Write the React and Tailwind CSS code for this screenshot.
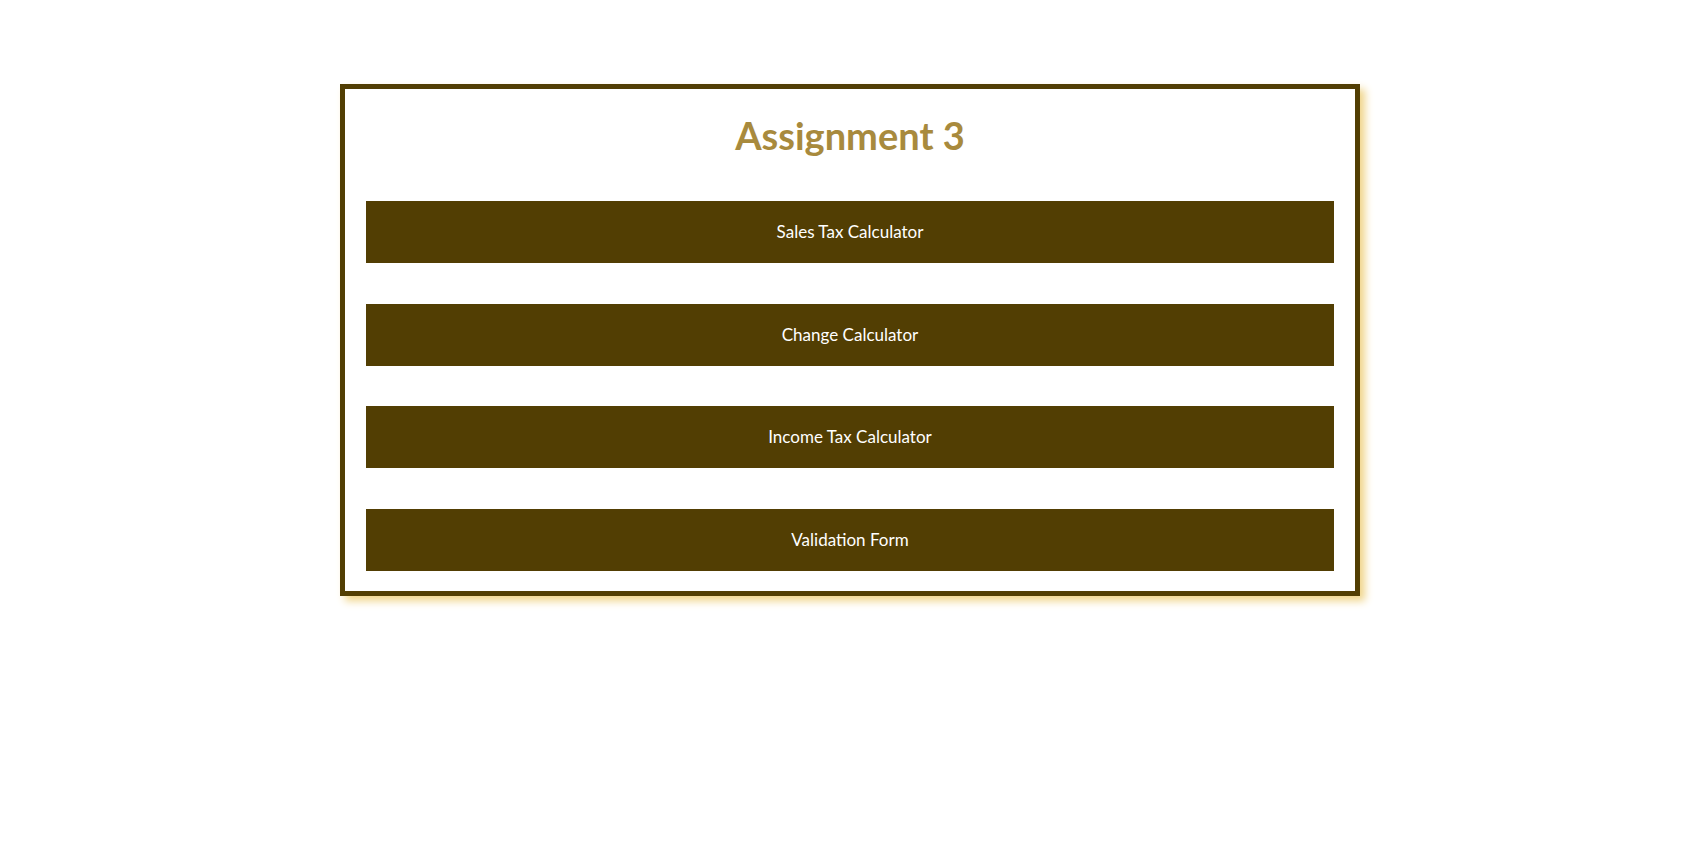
export default function App() {
  const links = [
    "Sales Tax Calculator",
    "Change Calculator",
    "Income Tax Calculator",
    "Validation Form",
  ];

  return (
    <div className="min-h-screen bg-white font-['Lato',_'Open_Sans',_sans-serif]">
      <div className="pt-[84px] flex justify-center">
        <div className="w-[1020px] border-[5px] border-[#523e03] bg-white px-[21px] pt-[24px] pb-[20.5px] shadow-[5px_5px_8px_#f0d58a]">
          <h1 className="text-center text-[38px] leading-[44px] font-bold text-[#a88a3d] mb-[44px]">
            Assignment 3
          </h1>
          <div className="flex flex-col gap-[40.5px]">
            {links.map((l) => (
              <button
                key={l}
                className="h-[62px] w-full bg-[#523e03] text-white text-[17px] flex items-center justify-center"
              >
                {l}
              </button>
            ))}
          </div>
        </div>
      </div>
    </div>
  );
}
